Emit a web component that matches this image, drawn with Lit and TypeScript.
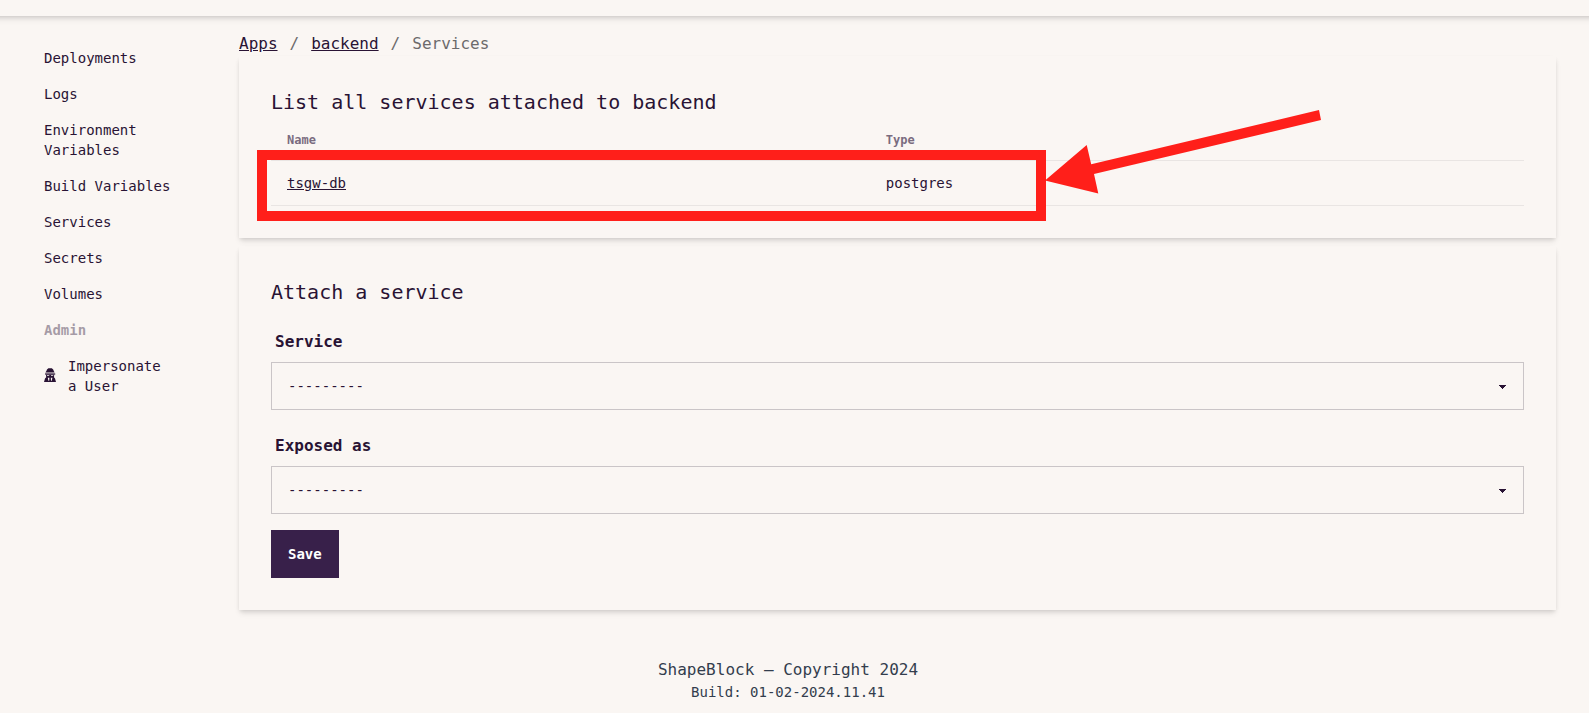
import { LitElement, html, css, svg } from "lit";
import { customElement } from "lit/decorators.js";

const NAV_LINKS = [
  "Deployments",
  "Logs",
  "Environment Variables",
  "Build Variables",
  "Services",
  "Secrets",
  "Volumes",
];

const SERVICES = [{ name: "tsgw-db", type: "postgres" }];

const FIELDS = [
  { id: "service", label: "Service" },
  { id: "exposed-as", label: "Exposed as" },
];

const spyIcon = svg`
  <path d="M4.4 0.2 H7.8 L9.2 1.4 L9.8 3 L10.6 4.4 H1.4 L2.4 3 L3 1.4 Z" />
  <path d="M1 5.4 H11.2 V6.6 H1 Z" />
  <path fill-rule="evenodd" d="M2 6.4 H10.2 L10 9.2 L11 10.6 L12 14 H0 L1 10.6 L2.2 9.2 Z M3 7 V7.8 H5.2 V7 Z M7 7 V7.8 H9.2 V7 Z M3.8 9.8 L4.4 12.8 H5.2 L5.4 9.8 Z M8.4 9.8 L7.8 12.8 H7 L6.8 9.8 Z" />
`;

@customElement("app-root")
export class AppRoot extends LitElement {
  static styles = css`
    :host {
      display: block;
      min-height: 100vh;
      background: #faf6f3;
      color: #291334;
      font-family: "DejaVu Sans Mono", "Liberation Mono", monospace;
      font-size: 16px;
      line-height: 24px;
      --shadow: 0 4px 6px -1px rgba(0, 0, 0, 0.1), 0 2px 4px -1px rgba(0, 0, 0, 0.1);
    }
    *,
    *::before,
    *::after {
      box-sizing: border-box;
    }
    a {
      color: inherit;
    }
    .page {
      overflow-x: clip;
    }
    .topbar {
      height: 16px;
      margin: 0 -8px;
      box-shadow: var(--shadow);
    }
    .layout {
      display: grid;
      grid-template-columns: 175px minmax(0, 1fr);
      gap: 64px;
      padding: 16px 33px 0 0;
    }
    .menu {
      list-style: none;
      margin: 0;
      padding: 8px 0 0 28px;
      font-size: 14px;
      line-height: 20px;
    }
    .menu-link {
      display: flex;
      align-items: center;
      gap: 12px;
      padding: 8px 0 8px 16px;
      text-decoration: none;
    }
    .menu-title {
      padding: 8px 0 8px 16px;
      font-weight: 700;
      opacity: 0.4;
    }
    .menu-icon {
      flex: none;
      width: 12px;
      height: 16px;
      fill: currentColor;
    }
    .crumbs {
      display: flex;
      gap: 12px;
      list-style: none;
      margin: 0;
      padding: 0;
      color: #6c6a6b;
    }
    .crumb-link {
      color: #291334;
    }
    .cards {
      display: grid;
      gap: 8px;
    }
    .card {
      padding: 32px;
      box-shadow: var(--shadow);
    }
    .title {
      margin: 0;
      font-size: 20px;
      line-height: 28px;
      font-weight: 400;
    }
    .table-wrap {
      position: relative;
      margin-top: 4px;
    }
    .table {
      width: 100%;
      border-collapse: separate;
      border-spacing: 0;
      text-align: left;
      font-size: 14px;
      line-height: 20px;
    }
    .cell {
      padding: 12px 16px;
      border-bottom: 1px solid #e9e5e3;
    }
    .head {
      font-size: 12px;
      line-height: 16px;
      font-weight: 700;
      color: #7a6c80;
    }
    .highlight {
      position: absolute;
      top: 30px;
      left: -14px;
      right: 478px;
      height: 71px;
      border: 10px solid #ff1f1a;
      pointer-events: none;
    }
    .arrow {
      position: absolute;
      top: -10px;
      right: 203px;
      width: 276px;
      height: 84px;
      fill: #ff1f1a;
      pointer-events: none;
    }
    .form {
      display: grid;
      gap: 16px;
      margin-top: 16px;
    }
    .label {
      display: block;
      padding: 8px 4px;
      font-weight: 700;
    }
    .select {
      display: block;
      width: 100%;
      height: 48px;
      padding: 0 40px 0 16px;
      border: 1px solid #cac5c7;
      border-radius: 0;
      appearance: none;
      color: inherit;
      font-family: inherit;
      font-size: 14px;
      line-height: 20px;
      background-color: transparent;
      background-image: linear-gradient(45deg, transparent 50%, currentColor 50%),
        linear-gradient(135deg, currentColor 50%, transparent 50%);
      background-position: calc(100% - 20px) calc(50% + 1px), calc(100% - 16px) calc(50% + 1px);
      background-size: 4px 4px, 4px 4px;
      background-repeat: no-repeat;
    }
    .save {
      justify-self: start;
      height: 48px;
      padding: 0 16px;
      border: 1px solid #38204a;
      border-radius: 0;
      background: #38204a;
      color: #fff;
      font-family: inherit;
      font-size: 14px;
      font-weight: 700;
      cursor: pointer;
    }
    .footer {
      padding: 48px 13px 11px 0;
      text-align: center;
      color: #333d4d;
    }
    .copyright,
    .build {
      margin: 0;
    }
    .build {
      font-size: 14px;
      line-height: 20px;
    }
  `;

  render() {
    return html`
      <div class="page">
        <header class="topbar"></header>
        <div class="layout">
          <nav aria-label="App">
            <ul class="menu">
              ${NAV_LINKS.map((text) => html`<li><a class="menu-link" href="#">${text}</a></li>`)}
              <li class="menu-title">Admin</li>
              <li>
                <a class="menu-link" href="#">
                  <svg class="menu-icon" viewBox="0 0 12 16" aria-hidden="true">${spyIcon}</svg>
                  <span>Impersonate a User</span>
                </a>
              </li>
            </ul>
          </nav>
          <main>
            <ul class="crumbs">
              <li><a class="crumb-link" href="#">Apps</a></li>
              <li>/</li>
              <li><a class="crumb-link" href="#">backend</a></li>
              <li>/</li>
              <li>Services</li>
            </ul>
            <div class="cards">
              <section class="card">
                <h2 class="title">List all services attached to backend</h2>
                <div class="table-wrap">
                  <table class="table">
                    <thead>
                      <tr>
                        <th class="cell head">Name</th>
                        <th class="cell head">Type</th>
                      </tr>
                    </thead>
                    <tbody>
                      ${SERVICES.map(
                        (s) => html`<tr>
                          <td class="cell"><a href="#">${s.name}</a></td>
                          <td class="cell">${s.type}</td>
                        </tr>`
                      )}
                    </tbody>
                  </table>
                  <div class="highlight"></div>
                  <svg class="arrow" viewBox="0 0 276 84" aria-hidden="true">
                    <path d="M0 70.5 L41.7 35 L46.2 54.3 L274 0 L276 10 L49 64 L53.3 83.5 Z" />
                  </svg>
                </div>
              </section>
              <section class="card">
                <h2 class="title">Attach a service</h2>
                <form class="form" @submit=${(e: Event) => e.preventDefault()}>
                  ${FIELDS.map(
                    (f) => html`<div>
                      <label class="label" for=${f.id}>${f.label}</label>
                      <select class="select" id=${f.id}>
                        <option>---------</option>
                      </select>
                    </div>`
                  )}
                  <button class="save" type="submit">Save</button>
                </form>
              </section>
            </div>
          </main>
        </div>
        <footer class="footer">
          <p class="copyright">ShapeBlock — Copyright 2024</p>
          <p class="build">Build: 01-02-2024.11.41</p>
        </footer>
      </div>
    `;
  }
}
